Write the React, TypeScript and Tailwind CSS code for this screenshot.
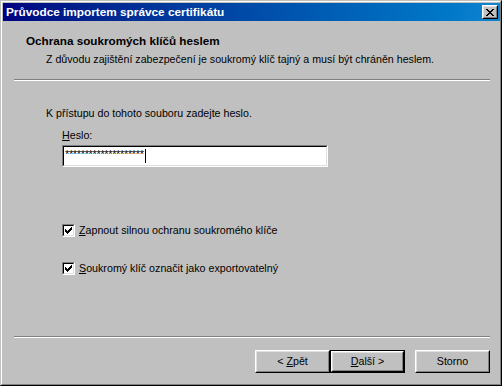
import React from "react";

function Btn({ children, def }: { children: React.ReactNode; def?: boolean }) {
  const inner = (
    <div className="w-full h-full border-t border-l border-t-white border-l-white border-b border-r border-b-black border-r-black">
      <div className="w-full h-full border-t border-l border-t-[#dfdfdf] border-l-[#dfdfdf] border-b border-r border-b-[#808080] border-r-[#808080] flex items-center justify-center text-[10.7px] leading-[13px] text-black whitespace-pre">
        {children}
      </div>
    </div>
  );
  if (def) {
    return <div className="w-[75px] h-[23px] border border-black">{inner}</div>;
  }
  return <div className="w-[75px] h-[23px]">{inner}</div>;
}

function Check() {
  return (
    <div className="w-[13px] h-[13px] shrink-0 border-t border-l border-t-[#808080] border-l-[#808080] border-b border-r border-b-white border-r-white">
      <div className="w-full h-full border-t border-l border-t-black border-l-black border-b border-r border-b-[#dfdfdf] border-r-[#dfdfdf] bg-white">
        <svg width="9" height="9" viewBox="0 0 9 9" shapeRendering="crispEdges" className="block">
          <rect x="7" y="1" width="1" height="3" fill="#000" />
          <rect x="6" y="2" width="1" height="3" fill="#000" />
          <rect x="5" y="3" width="1" height="3" fill="#000" />
          <rect x="4" y="4" width="1" height="3" fill="#000" />
          <rect x="3" y="5" width="1" height="3" fill="#000" />
          <rect x="2" y="4" width="1" height="3" fill="#000" />
          <rect x="1" y="3" width="1" height="3" fill="#000" />
        </svg>
      </div>
    </div>
  );
}

export default function App() {
  return (
    <div className="w-[502px] h-[386px] overflow-hidden bg-[#c0c0c0] [font-family:'Liberation_Sans',Arial,sans-serif] text-black">
      <div className="w-[502px] h-[386px] border-t border-l border-t-[#c0c0c0] border-l-[#c0c0c0] border-b border-r border-b-black border-r-black">
        <div className="w-full h-full border-t border-l border-t-white border-l-white border-b border-r border-b-[#808080] border-r-[#808080] pt-px pl-px flex flex-col">
          {/* Title bar */}
          <div className="h-[18px] shrink-0 flex items-center justify-between bg-gradient-to-r from-[#000080] to-[#1084d0] pl-[3px] pr-[2px]">
            <span className="text-white font-bold text-[11.8px] leading-[13px] whitespace-nowrap">
              Průvodce importem správce certifikátu
            </span>
            <div className="w-[16px] h-[14px] border-t border-l border-t-white border-l-white border-b border-r border-b-black border-r-black bg-[#c0c0c0]">
              <div className="w-full h-full border-t border-l border-t-[#dfdfdf] border-l-[#dfdfdf] border-b border-r border-b-[#808080] border-r-[#808080] flex items-center justify-center">
                <svg width="8" height="7" viewBox="0 0 8 7" shapeRendering="crispEdges" className="block">
                  <rect x="0" y="0" width="2" height="1" fill="#000" />
                  <rect x="6" y="0" width="2" height="1" fill="#000" />
                  <rect x="1" y="1" width="2" height="1" fill="#000" />
                  <rect x="5" y="1" width="2" height="1" fill="#000" />
                  <rect x="2" y="2" width="4" height="1" fill="#000" />
                  <rect x="3" y="3" width="2" height="1" fill="#000" />
                  <rect x="2" y="4" width="4" height="1" fill="#000" />
                  <rect x="1" y="5" width="2" height="1" fill="#000" />
                  <rect x="5" y="5" width="2" height="1" fill="#000" />
                  <rect x="0" y="6" width="2" height="1" fill="#000" />
                  <rect x="6" y="6" width="2" height="1" fill="#000" />
                </svg>
              </div>
            </div>
          </div>

          {/* Header */}
          <div className="pt-[13px] pl-[23px] font-bold text-[11.7px] leading-[13px] whitespace-nowrap">
            Ochrana soukromých klíčů heslem
          </div>
          <div className="mt-[6px] pl-[43px] text-[10.65px] leading-[13px] whitespace-nowrap">
            Z důvodu zajištění zabezpečení je soukromý klíč tajný a musí být chráněn heslem.
          </div>
          <div className="mt-[13px] ml-[11px] w-[476px] h-[2px] border-t border-t-[#808080] border-b border-b-white" />

          {/* Body */}
          <div className="mt-[26px] pl-[43px] text-[10.65px] leading-[13px] whitespace-nowrap">
            K přístupu do tohoto souboru zadejte heslo.
          </div>
          <div className="mt-[9px] pl-[59px] text-[10.7px] leading-[13px]">
            <span className="underline">H</span>eslo:
          </div>
          <div className="mt-[3px] ml-[59px] w-[266px] h-[22px] border-t border-l border-t-[#808080] border-l-[#808080] border-b border-r border-b-white border-r-white">
            <div className="w-full h-full border-t border-l border-t-black border-l-black border-b border-r border-b-[#dfdfdf] border-r-[#dfdfdf] bg-white flex items-start pl-[1px] pt-[1px]">
              <span className="text-[11px] leading-[13px] tracking-[-0.35px] whitespace-nowrap">********************</span>
              <span className="ml-[1px] mt-[1px] w-px h-[14px] bg-black" />
            </div>
          </div>

          <div className="mt-[57px] pl-[59px] flex items-center gap-[4px] h-[13px] text-[10.7px] leading-[13px] whitespace-nowrap">
            <Check />
            <span>
              <span className="underline">Z</span>apnout silnou ochranu soukromého klíče
            </span>
          </div>
          <div className="mt-[25px] pl-[59px] flex items-center gap-[4px] h-[13px] text-[10.7px] leading-[13px] whitespace-nowrap">
            <Check />
            <span>
              <span className="underline">S</span>oukromý klíč označit jako exportovatelný
            </span>
          </div>

          <div className="mt-[61px] ml-[11px] w-[476px] h-[2px] border-t border-t-[#808080] border-b border-b-white" />

          <div className="mt-[12px] flex justify-end pr-[10px]">
            <Btn>
              {"< "}<span className="underline">Z</span>{"pět"}
            </Btn>
            <Btn def>
              <span className="underline">D</span>{"alší >"}
            </Btn>
            <div className="w-[10px]" />
            <Btn>Storno</Btn>
          </div>
        </div>
      </div>
    </div>
  );
}
